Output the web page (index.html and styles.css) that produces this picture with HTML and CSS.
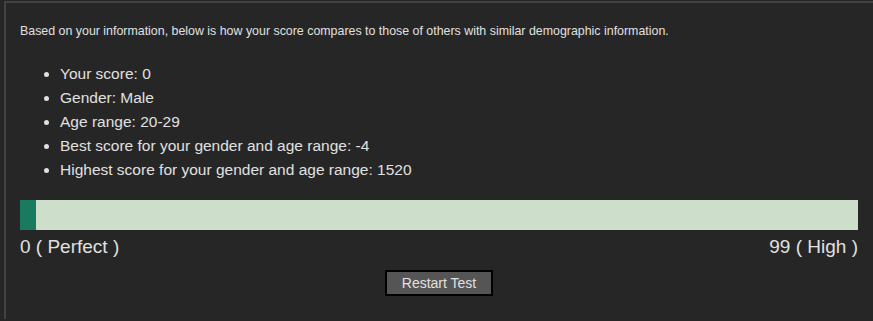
FILE: index.html
```html
<!DOCTYPE html>
<html lang="en">
<head>
  <meta charset="UTF-8">
  <title>Score Comparison</title>
  <link rel="stylesheet" href="styles.css">
</head>
<body>
<div class="panel">
  <p class="intro">Based on your information, below is how your score compares to those of others with similar demographic information.</p>
  <ul class="stats">
    <li>Your score: 0</li>
    <li>Gender: Male</li>
    <li>Age range: 20-29</li>
    <li>Best score for your gender and age range: -4</li>
    <li>Highest score for your gender and age range: 1520</li>
  </ul>
  <div class="bar">
    <div class="bar-fill" style="width: 16px;"></div>
  </div>
  <div class="bar-labels">
    <span>0 ( Perfect )</span>
    <span>99 ( High )</span>
  </div>
  <div class="actions">
    <button>Restart Test</button>
  </div>
</div>
</body>
</html>
```
FILE: styles.css
```css
body {
  margin: 0;
  background: #262626;
  font-family: Arial, "Liberation Sans", sans-serif;
  color: #e0e0e0;
}
.panel {
  margin: 1px 0 0 4px;
  border-top: 2px solid #424242;
  border-left: 2px solid #424242;
  padding: 0 15px 0 14px;
  height: 318px;
  box-sizing: border-box;
}
.intro {
  margin: 0;
  padding-top: 21px;
  font-size: 12.4px;
  line-height: 15px;
}
.stats {
  margin: 23px 0 0;
  padding-left: 40px;
  font-size: 15.5px;
  line-height: 24px;
}
.bar {
  margin-top: 18px;
  height: 30px;
  background: #cddecb;
  display: flex;
}
.bar-fill {
  background: #1a7a5f;
}
.bar-labels {
  display: flex;
  justify-content: space-between;
  font-size: 19px;
  line-height: 22px;
  margin-top: 6px;
}
.actions {
  text-align: center;
  margin-top: 12px;
}
button {
  background: #555;
  color: #e0e0e0;
  border: 2px solid #000;
  font-family: Arial, "Liberation Sans", sans-serif;
  font-size: 14px;
  width: 108px;
  height: 26px;
  padding: 0;
}
```
